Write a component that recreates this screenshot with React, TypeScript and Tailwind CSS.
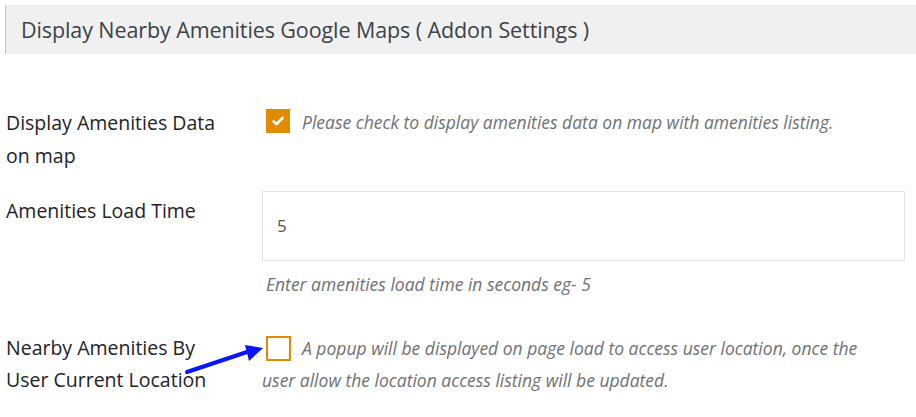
import React from "react";

const FONT = { fontFamily: '"Open Sans", "Noto Sans", sans-serif' };

function Check({ checked }: { checked: boolean }) {
  if (checked) {
    return (
      <span className="inline-flex items-center justify-center w-[24px] h-[24px] bg-[#e38b00] align-middle">
        <svg width="12" height="10" viewBox="0 0 12 10">
          <path d="M1.5 5.5 L4.5 8 L10.5 2" stroke="#fff" strokeWidth="2.6" fill="none" strokeLinecap="round" strokeLinejoin="round" />
        </svg>
      </span>
    );
  }
  return <span className="inline-block w-[25px] h-[25px] border-2 border-[#e38b00] bg-white align-middle" />;
}

export default function App() {
  return (
    <div className="relative w-[916px] h-[417px] bg-white overflow-hidden" style={FONT}>
      <div className="mt-[5px] ml-[5px] h-[49px] bg-[#f0f0f0] border-l border-[#e8c75c] pl-[15px] pt-[2px] flex items-center">
        <h2 className="text-[21.5px] text-[#3c434a] tracking-[-0.1px]">
          Display Nearby Amenities Google Maps ( Addon Settings )
        </h2>
      </div>

      {/* row 1 */}
      <div className="flex mt-[52px]">
        <div className="w-[262px] pl-[6px] shrink-0">
          <p className="w-[225px] text-[19.5px] leading-[33px] text-[#1d2327]">Display Amenities Data on map</p>
        </div>
        <div className="pt-[3px] pl-[4px] flex items-start">
          <Check checked />
          <span className="ml-[12px] text-[17.5px] leading-[27px] italic text-[#6f7175]">
            Please check to display amenities data on map with amenities listing.
          </span>
        </div>
      </div>

      {/* row 2 */}
      <div className="flex mt-[19px]">
        <div className="w-[262px] pl-[6px] shrink-0 pt-[3px]">
          <p className="text-[19.5px] leading-[33px] text-[#1d2327]">Amenities Load Time</p>
        </div>
        <div className="flex-1 pr-[11px]">
          <div className="h-[70px] border border-[#e2e2e2] bg-white flex items-center pl-[14px] text-[17px] text-[#555]">
            5
          </div>
          <p className="mt-[9px] pl-[4px] text-[17.5px] leading-[28px] italic text-[#6f7175]">
            Enter amenities load time in seconds eg- 5
          </p>
        </div>
      </div>

      {/* row 3 */}
      <div className="flex mt-[34px]">
        <div className="w-[262px] pl-[6px] shrink-0">
          <p className="w-[225px] text-[19.5px] leading-[32px] text-[#1d2327]">Nearby Amenities By User Current Location</p>
        </div>
        <div className="w-[615px]">
          <p className="text-[17.5px] leading-[32px] italic text-[#6f7175]">
            <span className="ml-[4px] mr-[11px] inline-block -translate-y-[2px]">
              <Check checked={false} />
            </span>
            A popup will be displayed on page load to access user location, once the user allow the location access listing will be updated.
          </p>
        </div>
      </div>

      <svg className="absolute left-0 top-0 pointer-events-none" width="916" height="417">
        <line x1="187" y1="372" x2="250" y2="351" stroke="#0a14ff" strokeWidth="4" strokeLinecap="round" />
        <polygon points="263,348 245,345 249,361" fill="#0a14ff" />
      </svg>
    </div>
  );
}
